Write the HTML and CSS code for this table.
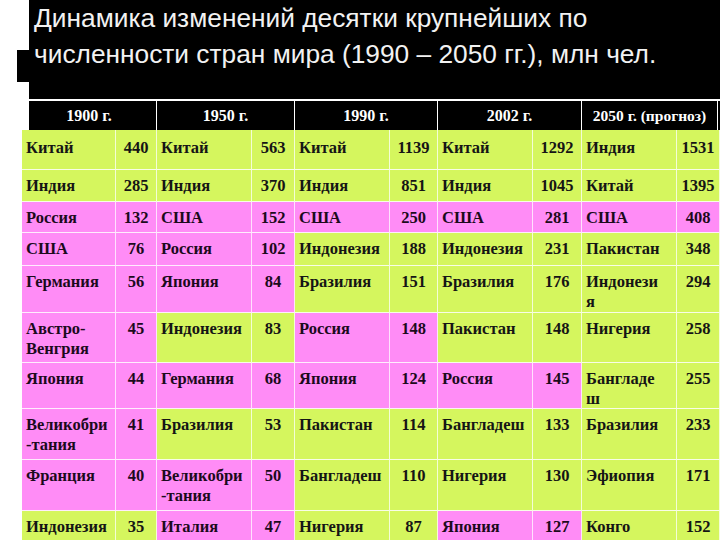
FILE: index.html
```html
<!DOCTYPE html>
<html lang="ru">
<head>
<meta charset="utf-8">
<title>Динамика изменений</title>
<link rel="stylesheet" href="styles.css">
</head>
<body>
<div class="top">
  <div class="strip"><div class="bar"></div></div>
  <div class="slide">
    <h1 class="title">Динамика изменений десятки крупнейших по<br>численности стран мира (1990 – 2050 гг.), млн чел.</h1>
    <div class="head">
      <div class="hc w1">1900 г.</div>
      <div class="hc w2">1950 г.</div>
      <div class="hc w3">1990 г.</div>
      <div class="hc w4">2002 г.</div>
      <div class="hc w5">2050 г. (прогноз)</div>
    </div>
  </div>
</div>
<div class="grid">
  <div class="c g">Китай</div><div class="c g n">440</div><div class="c g">Китай</div><div class="c g n">563</div><div class="c g">Китай</div><div class="c g n">1139</div><div class="c g">Китай</div><div class="c g n">1292</div><div class="c g">Индия</div><div class="c g n">1531</div>

  <div class="c g">Индия</div><div class="c g n">285</div><div class="c g">Индия</div><div class="c g n">370</div><div class="c g">Индия</div><div class="c g n">851</div><div class="c g">Индия</div><div class="c g n">1045</div><div class="c g">Китай</div><div class="c g n">1395</div>

  <div class="c p">Россия</div><div class="c p n">132</div><div class="c p">США</div><div class="c p n">152</div><div class="c p">США</div><div class="c p n">250</div><div class="c p">США</div><div class="c p n">281</div><div class="c p">США</div><div class="c p n">408</div>

  <div class="c p">США</div><div class="c p n">76</div><div class="c p">Россия</div><div class="c p n">102</div><div class="c g">Индонезия</div><div class="c g n">188</div><div class="c g">Индонезия</div><div class="c g n">231</div><div class="c g">Пакистан</div><div class="c g n">348</div>

  <div class="c p">Германия</div><div class="c p n">56</div><div class="c p">Япония</div><div class="c p n">84</div><div class="c g">Бразилия</div><div class="c g n">151</div><div class="c g">Бразилия</div><div class="c g n">176</div><div class="c g">Индонези<br>я</div><div class="c g n">294</div>

  <div class="c p">Австро-<br>Венгрия</div><div class="c p n">45</div><div class="c g">Индонезия</div><div class="c g n">83</div><div class="c p">Россия</div><div class="c p n">148</div><div class="c g">Пакистан</div><div class="c g n">148</div><div class="c g">Нигерия</div><div class="c g n">258</div>

  <div class="c p">Япония</div><div class="c p n">44</div><div class="c p">Германия</div><div class="c p n">68</div><div class="c p">Япония</div><div class="c p n">124</div><div class="c p">Россия</div><div class="c p n">145</div><div class="c g">Бангладе<br>ш</div><div class="c g n">255</div>

  <div class="c p">Великобри<br>-тания</div><div class="c p n">41</div><div class="c g">Бразилия</div><div class="c g n">53</div><div class="c g">Пакистан</div><div class="c g n">114</div><div class="c g">Бангладеш</div><div class="c g n">133</div><div class="c g">Бразилия</div><div class="c g n">233</div>

  <div class="c p">Франция</div><div class="c p n">40</div><div class="c p">Великобри<br>-тания</div><div class="c p n">50</div><div class="c g">Бангладеш</div><div class="c g n">110</div><div class="c g">Нигерия</div><div class="c g n">130</div><div class="c g">Эфиопия</div><div class="c g n">171</div>

  <div class="c g">Индонезия</div><div class="c g n">35</div><div class="c p">Италия</div><div class="c p n">47</div><div class="c g">Нигерия</div><div class="c g n">87</div><div class="c p">Япония</div><div class="c p n">127</div><div class="c g">Конго</div><div class="c g n">152</div>
</div>
</body>
</html>
```
FILE: styles.css
```css
html, body {
  margin: 0;
  padding: 0;
  background: #ffffff;
  overflow: hidden;
}
body {
  width: 720px;
  height: 540px;
  font-family: "Liberation Serif", "Times New Roman", serif;
}
.top {
  display: flex;
  height: 130px;
}
.strip {
  width: 29px;
  flex: none;
  padding-top: 50px;
  box-sizing: border-box;
}
.bar {
  width: 12px;
  height: 32px;
  margin-left: 17px;
  background: #000;
}
.slide {
  flex: 1;
  background: #000;
  display: flex;
  flex-direction: column;
}
.title {
  margin: 0;
  height: 99px;
  box-sizing: border-box;
  padding: 0 0 0 5px;
  font-family: "Liberation Sans", Arial, sans-serif;
  font-weight: normal;
  font-size: 26.3px;
  line-height: 36px;
  color: #f2f2f2;
  white-space: nowrap;
}
.head {
  display: flex;
  height: 31px;
  border-top: 2px solid #ffffff;
  box-sizing: border-box;
}
.hc {
  flex: none;
  box-sizing: border-box;
  color: #ffffff;
  font-weight: bold;
  font-size: 16px;
  line-height: 29px;
  text-align: center;
  border-right: 1px solid #ffffff;
}
.w1 { width: 128px; padding-right: 7px; }
.w2 { width: 138px; }
.w3 { width: 143px; }
.w4 { width: 144px; }
.w5 { width: 136px; font-size: 15.5px; }
.grid {
  margin-left: 22px;
  display: grid;
  grid-template-columns: 94px 41px 95px 43px 95px 48px 95px 49px 95px 43px;
  grid-template-rows: 40px 32px 31px 33px 47px 50px 46px 51px 51px 40px;
}
.c {
  box-sizing: border-box;
  padding: 6px 2px 0 4px;
  font-size: 16.5px;
  font-weight: bold;
  line-height: 20px;
  color: #151515;
  border-right: 1px solid rgba(255, 255, 255, 0.75);
  border-bottom: 1px solid rgba(255, 255, 255, 0.85);
  white-space: nowrap;
}
.grid > .c:nth-child(-n+10) {
  padding-top: 8px;
}
.n {
  text-align: center;
  padding-left: 0;
  padding-right: 0;
}
.g { background: #d5f65e; }
.p { background: #ff8cf6; color: #1c0a1c; }
```
